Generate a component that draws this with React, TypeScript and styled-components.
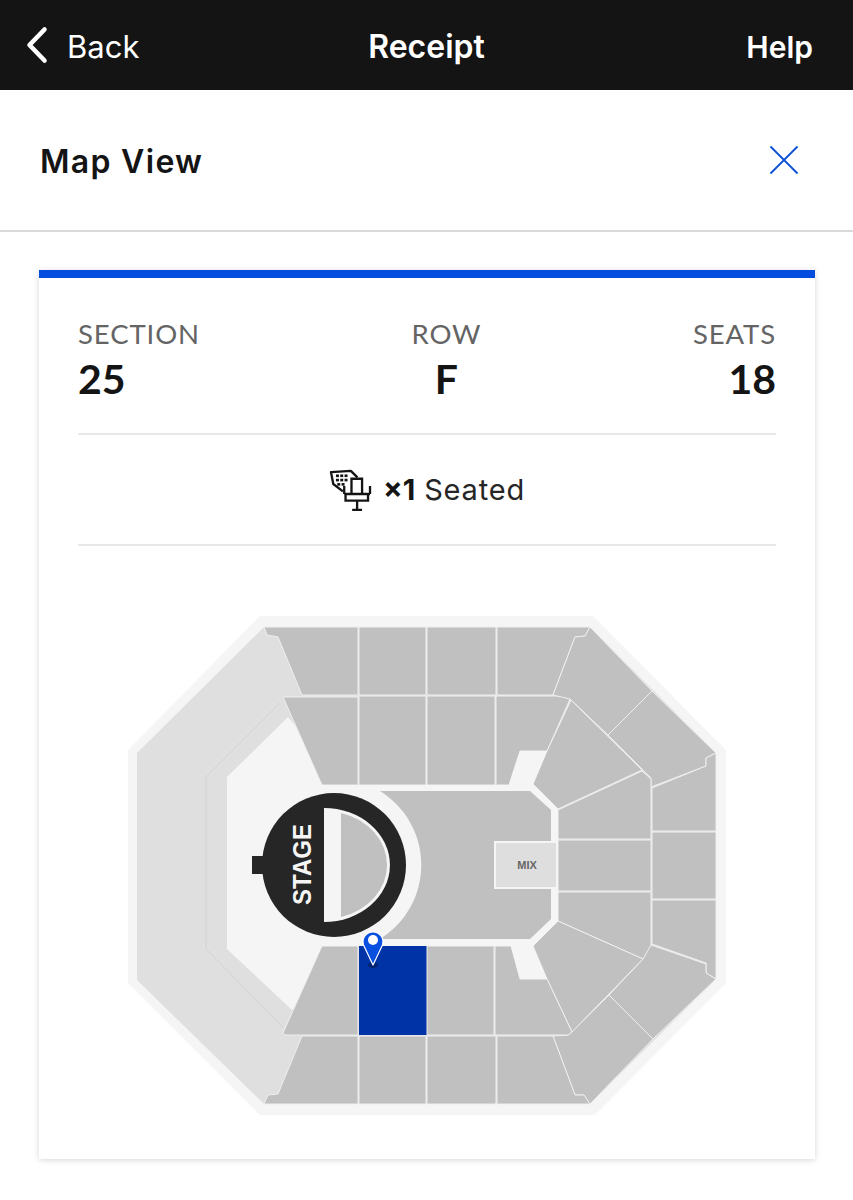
import React from "react";
import styled, { createGlobalStyle } from "styled-components";

const Global = createGlobalStyle`
  html, body { margin: 0; padding: 0; background: #fff; }
  body { width: 853px; height: 1200px; overflow: hidden; font-family: "Lato", "Noto Sans", sans-serif; }
  * { box-sizing: border-box; }
`;

const Page = styled.div`
  width: 853px;
  height: 1200px;
  display: flex;
  flex-direction: column;
`;

const TopBar = styled.header`
  height: 90px;
  background: #141414;
  color: #fff;
  display: grid;
  grid-template-columns: 1fr auto 1fr;
  align-items: center;
  padding: 3px 40px 0;
  font-family: "Inter", "Liberation Sans", sans-serif;
`;

const BackLink = styled.div`
  display: flex;
  align-items: center;
  gap: 19px;
  margin-left: -14px;
  font-size: 31px;
  font-weight: 400;
`;

const BackIcon = styled.svg`
  margin-top: -3px;
`;

const Title = styled.div`
  font-size: 32px;
  font-weight: 600;
`;

const Help = styled.div`
  font-size: 30px;
  font-weight: 600;
  justify-self: end;
`;

const SubHeader = styled.div`
  height: 142px;
  border-bottom: 2px solid #d9d9d9;
  display: flex;
  align-items: center;
  justify-content: space-between;
  padding: 0 54px 0 40px;
`;

const SubTitle = styled.h1`
  margin: 2px 0 0;
  font-family: "Inter", "Lato", sans-serif;
  font-size: 32px;
  font-weight: 600;
  letter-spacing: 1.3px;
  color: #141414;
`;

const Card = styled.section`
  margin: 38px 38px 0 39px;
  height: 889px;
  background: #fff;
  border-top: 8px solid #024ddf;
  box-shadow: 0 1px 6px rgba(0, 0, 0, 0.16);
`;

const InfoRow = styled.div`
  margin: 0 39px;
  height: 157px;
  padding-top: 39px;
  display: flex;
  justify-content: space-between;
  border-bottom: 2px solid #e8e8e8;
`;

const InfoCell = styled.div<{ $align: string }>`
  text-align: ${(p) => p.$align};
`;

const InfoLabel = styled.div`
  font-size: 27.5px;
  line-height: 33px;
  color: #646464;
  letter-spacing: 0.9px;
`;

const InfoValue = styled.div`
  font-size: 41px;
  line-height: 50px;
  margin-top: 4px;
  font-weight: 700;
  color: #141414;
`;

const SeatRow = styled.div`
  margin: 0 39px;
  height: 111px;
  border-bottom: 2px solid #e8e8e8;
  display: flex;
  align-items: center;
  justify-content: center;
  gap: 11px;
  font-family: "Inter", "Lato", sans-serif;
  font-size: 29px;
  color: #262626;
`;

const SeatText = styled.span`
  letter-spacing: 0.8px;
  b { font-weight: 700; color: #141414; letter-spacing: 0; }
`;

const MapSvg = styled.svg`
  display: block;
  width: 776px;
  height: 613px;
`;

const Lines = styled.g`
  stroke: #efefef;
  stroke-width: 1;
  stroke-linejoin: round;
  fill: #c0c0c0;
`;

const StageLabel = styled.text`
  font-family: "Liberation Sans", Arial, sans-serif;
  font-weight: 700;
  font-size: 25px;
  fill: #f5f5f5;
`;

const MixLabel = styled.text`
  font-family: "Liberation Sans", Arial, sans-serif;
  font-weight: 700;
  font-size: 11px;
  fill: #666;
`;

const sections: string[] = [
  "264,627 358,627 358,695 302,695 278,637 267,635",
  "359,627 426,627 426,695 359,695",
  "427,627 496,627 496,695 427,695",
  "497,627 590,627 585,636 575,637 553,695 497,695",
  "283,697 358,697 358,785 322,785",
  "359,696 426,696 426,785 359,785",
  "427,696 495,696 495,785 427,785",
  "496,696 568,696 570,699 547,751 520,751 509,785 496,785",
  "590,627 652,691 608,735 570,699 553,695 575,637 585,636",
  "652,691 716,753 706,758 706,766 651,787 651,778 608,735",
  "571,700 642,770 558,809 533,784 547,751",
  "642,771 651,779 651,839 558,839 558,810",
  "558,840 651,840 651,891 558,891",
  "558,892 651,892 651,952 643,959 558,921",
  "652,788 706,766 706,758 716,753 716,831 652,831",
  "652,832 716,832 716,899 652,899",
  "652,900 716,900 716,979 706,973 706,963 652,944",
  "651,945 706,964 706,973 716,979 653,1039 609,995 643,959",
  "609,995 653,1039 590,1104 584,1095 575,1095 553,1036 568,1035 572,1032",
  "533,946 558,921 643,959 572,1032 547,979",
  "322,946 358,946 358,1035 285,1035 283,1033",
  "427,946 494,946 494,1035 427,1035",
  "495,946 511,946 520,979 547,979 572,1032 568,1035 495,1035",
  "302,1036 358,1036 358,1104 264,1104 268,1095 278,1094",
  "359,1036 426,1036 426,1104 359,1104",
  "427,1036 496,1036 496,1104 427,1104",
  "497,1036 553,1036 575,1095 584,1095 590,1104 497,1104",
];

export default function App() {
  return (
    <Page>
      <Global />
      <TopBar>
        <BackLink>
          <BackIcon width="22" height="38" viewBox="0 0 22 38" fill="none">
            <path d="M18.5 3.5 L3.5 19 L18.5 34.5" stroke="#fff" strokeWidth="4.6" strokeLinecap="round" strokeLinejoin="round" />
          </BackIcon>
          <span>Back</span>
        </BackLink>
        <Title>Receipt</Title>
        <Help>Help</Help>
      </TopBar>
      <SubHeader>
        <SubTitle>Map View</SubTitle>
        <svg width="30" height="30" viewBox="0 0 30 30" fill="none">
          <path d="M1.5 1.5 L28.5 28.5 M28.5 1.5 L1.5 28.5" stroke="#0a50d8" strokeWidth="1.8" />
        </svg>
      </SubHeader>
      <Card>
        <InfoRow>
          <InfoCell $align="left">
            <InfoLabel>SECTION</InfoLabel>
            <InfoValue>25</InfoValue>
          </InfoCell>
          <InfoCell $align="center">
            <InfoLabel>ROW</InfoLabel>
            <InfoValue>F</InfoValue>
          </InfoCell>
          <InfoCell $align="right">
            <InfoLabel>SEATS</InfoLabel>
            <InfoValue>18</InfoValue>
          </InfoCell>
        </InfoRow>
        <SeatRow>
          <svg width="43" height="44" viewBox="90 52 130 132" fill="none" stroke="#141414" strokeWidth="7">
            <path d="M176 80 L156 60 L96 64 L103 100 L132 122" strokeLinejoin="round" />
            <path d="M158 128 V84 H190 V128" />
            <path d="M136 106 V130 M136 130 H214 M214 106 V130 M140 130 V150 H208 V130" />
            <path d="M175 150 V178 M160 178 H190" />
            <g fill="#141414" stroke="none">
              <rect x="111" y="71" width="9" height="8" /><rect x="124" y="71" width="9" height="8" /><rect x="137" y="71" width="9" height="8" />
              <rect x="111" y="84" width="9" height="8" /><rect x="124" y="84" width="9" height="8" /><rect x="137" y="84" width="9" height="8" />
              <rect x="115" y="97" width="9" height="8" /><rect x="128" y="97" width="9" height="8" />
            </g>
          </svg>
          <SeatText><b>×1</b> Seated</SeatText>
        </SeatRow>
        <MapSvg viewBox="39 546 776 613">
          <polygon points="260,616 593,616 726,750 726,983 595,1115 260,1115 128,983 128,750" fill="#f5f5f5" />
          <polygon points="264,627 590,627 716,753 716,979 590,1104 264,1104 137,980 137,753" fill="#dfdfdf" />
          <path d="M206 777 L280 703 M206 777 V949 L283 1027" stroke="#d2d2d2" strokeWidth="1" fill="none" />
          <polygon points="227,777 288,717 340,780 340,950 292,1010 227,949" fill="#f5f5f5" />
          <Lines>
            {sections.map((p) => (
              <polygon key={p} points={p} />
            ))}
          </Lines>
          <polygon points="359,946 426.5,946 426.5,1035 359,1035" fill="#0033a5" />
          <polygon points="322,785 509,785 520,751 547,751 533,784 558,809 558,921 533,946 547,979 520,979 511,946 322,946" fill="#f5f5f5" />
          <path d="M380 791 H530 L551 810 V919 L530 939 H380 A87 87 0 0 0 380 791 Z" fill="#c0c0c0" />
          <rect x="495" y="842" width="62" height="46" fill="#dedede" stroke="#f5f5f5" strokeWidth="2" />
          <MixLabel x="527" y="869" textAnchor="middle">MIX</MixLabel>
          <rect x="252" y="856" width="14" height="18" fill="#262626" />
          <circle cx="334" cy="865" r="72" fill="#262626" />
          <path d="M324 808 A66 57 0 0 1 324 922 Z" fill="#f5f5f5" />
          <path d="M341 813 A63 54 0 0 1 341 917 Z" fill="#c0c0c0" />
          <StageLabel transform="translate(311 905) rotate(-90)" textLength="81" lengthAdjust="spacingAndGlyphs">STAGE</StageLabel>
          <ellipse cx="373" cy="965" rx="5" ry="3" fill="#00236f" />
          <path d="M373 965 L363.5 945 A10 10 0 1 1 382.5 945 Z" fill="#0a50e0" stroke="#fff" strokeWidth="1.2" strokeLinejoin="round" />
          <circle cx="373" cy="940" r="5" fill="#fff" />
        </MapSvg>
      </Card>
    </Page>
  );
}
